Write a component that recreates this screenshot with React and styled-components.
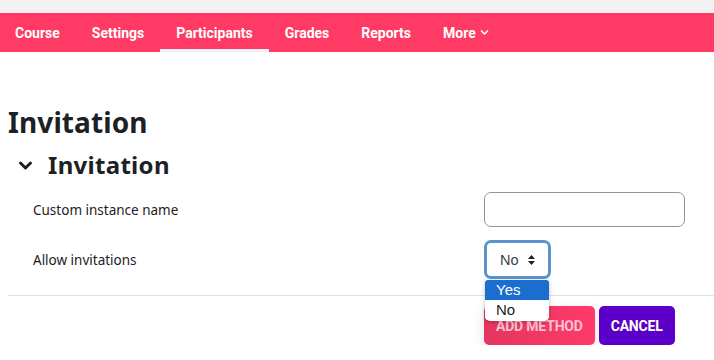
import React from 'react';
import styled, { createGlobalStyle } from 'styled-components';

const GlobalStyle = createGlobalStyle`
  body {
    margin: 0;
    background: #fff;
    font-family: 'Noto Sans', 'Open Sans', sans-serif;
    color: #1d2125;
  }
`;

const TopStrip = styled.div`
  height: 13px;
  background: #f2f2f2;
`;

const Nav = styled.nav`
  display: flex;
  height: 39px;
  background: #ff3a64;
`;

const NavItem = styled.a`
  position: relative;
  display: flex;
  align-items: center;
  gap: 4px;
  padding: 0 16px 0 ${({ $first }) => ($first ? '15px' : '16px')};
  color: #fff;
  font-family: Roboto, 'Liberation Sans', sans-serif;
  font-weight: 700;
  font-size: 14px;
  letter-spacing: 0;
  text-decoration: none;

  ${({ $active }) =>
    $active &&
    `
    &:after {
      content: '';
      position: absolute;
      left: 0;
      right: 0;
      bottom: 0;
      height: 3px;
      background: #eef3f8;
    }
  `}
`;

const Page = styled.main`
  padding: 50px 0 0 8px;
`;

const Title = styled.h2`
  margin: 0;
  font-size: 28px;
  font-weight: 700;
  line-height: 40px;
  letter-spacing: 0.1px;
`;

const SectionHead = styled.h3`
  display: flex;
  align-items: center;
  gap: 15px;
  margin: 6px 0 0 10px;
  font-size: 24px;
  font-weight: 700;
  line-height: 34px;
  letter-spacing: 0.3px;
`;

const Form = styled.div`
  display: grid;
  grid-template-columns: 451px auto;
  padding-left: 25px;
  margin-top: 10px;
  row-gap: 13px;
  align-items: center;
`;

const Label = styled.label`
  font-size: 13.5px;
  color: #1d2125;
`;

const TextInput = styled.div`
  width: 199px;
  height: 33px;
  border: 1px solid #8f959e;
  border-radius: 7px;
  background: #fff;
`;

const SelectWrap = styled.div`
  position: relative;
  width: 67px;
  height: 39px;
`;

const Select = styled.div`
  box-sizing: border-box;
  display: flex;
  align-items: center;
  justify-content: space-between;
  width: 67px;
  height: 39px;
  padding: 0 12px 0 13px;
  border: 3px solid #5a93cd;
  border-radius: 7px;
  font-family: 'Liberation Sans', Arial, sans-serif;
  font-size: 14.5px;
  color: #3a3f44;
`;

const ListBox = styled.ul`
  position: absolute;
  top: 40px;
  left: 1px;
  z-index: 5;
  width: 64px;
  margin: 0;
  padding: 0 0 1px;
  list-style: none;
  background: #fff;
  border-radius: 0 0 5px 5px;
  box-shadow: 0 1px 4px rgba(0, 0, 0, 0.25);
  overflow: hidden;
  font-family: 'Liberation Sans', Arial, sans-serif;
  font-size: 15px;
`;

const Option = styled.li`
  height: 20px;
  line-height: 20px;
  padding-left: 11px;
  color: ${({ $selected }) => ($selected ? '#fff' : '#1d2125')};
  background: ${({ $selected }) => ($selected ? '#1c6dd0' : '#fff')};
  border-radius: ${({ $selected }) => ($selected ? '3px 3px 0 0' : '0')};
`;

const Divider = styled.hr`
  margin: 16px 0 0;
  border: 0;
  border-top: 1px solid #dee2e6;
`;

const Actions = styled.div`
  display: flex;
  gap: 4px;
  padding: 10px 0 0 476px;
`;

const Button = styled.button`
  height: 39px;
  padding: 0 12px;
  border: 0;
  border-radius: 5px;
  font-family: Roboto, 'Liberation Sans', sans-serif;
  font-weight: 700;
  font-size: 14px;
  letter-spacing: -0.2px;
  color: ${({ $faded }) => ($faded ? 'rgba(255,255,255,0.7)' : '#fff')};
  background: ${({ $variant }) =>
    $variant === 'primary'
      ? 'linear-gradient(90deg, #e3365e, #ff3a6a)'
      : '#5a00c8'};
  box-shadow: ${({ $variant }) =>
    $variant === 'primary' ? '0 4px 14px rgba(0,0,0,0.12)' : 'none'};
`;

const Chevron = ({ size = 12, stroke = 2 }) => (
  <svg width={size} height={size} viewBox="0 0 12 12" fill="none">
    <path d="M2 4l4 4 4-4" stroke="currentColor" strokeWidth={stroke} strokeLinecap="round" strokeLinejoin="round" />
  </svg>
);

const Sorter = () => (
  <svg width="9" height="12" viewBox="0 0 9 12">
    <path d="M4.5 1L8 5H1z M4.5 11L1 7h7z" fill="#1d2125" />
  </svg>
);

const tabs = ['Course', 'Settings', 'Participants', 'Grades', 'Reports'];

export default function App() {
  return (
    <>
      <GlobalStyle />
      <TopStrip />
      <Nav>
        {tabs.map((t, i) => (
          <NavItem key={t} $first={i === 0} $active={t === 'Participants'}>
            {t}
          </NavItem>
        ))}
        <NavItem>
          More <Chevron size={9} stroke={2.2} />
        </NavItem>
      </Nav>

      <Page>
        <Title>Invitation</Title>
        <SectionHead>
          <Chevron size={15} stroke={2.4} />
          Invitation
        </SectionHead>

        <Form>
          <Label>Custom instance name</Label>
          <TextInput />
          <Label>Allow invitations</Label>
          <SelectWrap>
            <Select>
              No <Sorter />
            </Select>
            <ListBox>
              <Option $selected>Yes</Option>
              <Option>No</Option>
            </ListBox>
          </SelectWrap>
        </Form>

        <Divider />
        <Actions>
          <Button $variant="primary" $faded>ADD METHOD</Button>
          <Button>CANCEL</Button>
        </Actions>
      </Page>
    </>
  );
}
